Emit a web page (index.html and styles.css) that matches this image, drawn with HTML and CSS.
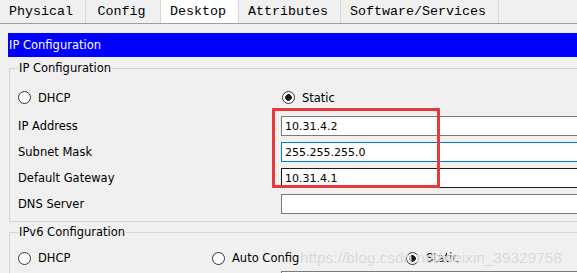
FILE: index.html
```html
<!DOCTYPE html>
<html lang="en">
<head>
    <meta charset="UTF-8">
    <title>IP Configuration</title>
    <link rel="stylesheet" href="styles.css">
</head>
<body>
    <div class="tabs">
        <span class="tab">Physical</span>
        <span class="tab tab-config">Config</span>
        <span class="tab active">Desktop</span>
        <span class="tab">Attributes</span>
        <span class="tab">Software/Services</span>
    </div>

    <div class="panel">
        <div class="title">IP Configuration</div>

        <fieldset class="group">
            <legend>IP Configuration</legend>
            <div class="rows">
                <label class="radio first"><input type="radio" name="v4"> DHCP</label>
                <label class="radio first"><input type="radio" name="v4" checked> Static</label>

                <span class="label">IP Address</span>
                <input class="field" type="text" value="10.31.4.2">

                <span class="label">Subnet Mask</span>
                <input class="field focus" type="text" value="255.255.255.0">

                <span class="label">Default Gateway</span>
                <input class="field dark" type="text" value="10.31.4.1">

                <span class="label">DNS Server</span>
                <input class="field" type="text" value="">
            </div>
        </fieldset>

        <fieldset class="group v6">
            <legend>IPv6 Configuration</legend>
            <div class="choices">
                <label class="radio"><input type="radio" name="v6"> DHCP</label>
                <label class="radio"><input type="radio" name="v6"> Auto Config</label>
                <label class="radio"><input type="radio" name="v6" checked> Static</label>
            </div>
            <div class="rows next">
                <span class="label"></span>
                <input class="field" type="text" value="">
            </div>
        </fieldset>
    </div>

    <div class="highlight"></div>
    <div class="watermark">https://blog.csdn.net/weixin_39329758</div>
</body>
</html>
```

FILE: styles.css
```css
body {
    margin: 0;
    background: #f0f0f0;
    font-family: "DejaVu Sans", sans-serif;
    font-size: 11.5px;
    color: #000;
    width: 577px;
    height: 273px;
    overflow: hidden;
    position: relative;
}
.tabs {
    display: flex;
    height: 23px;
    border-bottom: 1px solid #a0a0a0;
    background: #f0f0f0;
}
.tab {
    font-family: "Liberation Mono", monospace;
    font-size: 13.33px;
    line-height: 23px;
    padding: 0 12px 0 9px;
    border-right: 1px solid #d9d9d9;
    white-space: nowrap;
}
.tab-config {
    min-width: 53px;
    text-align: center;
}
.tab.active {
    background: #fff;
}
.panel {
    padding: 9px 0 0 8px;
    width: 720px;
}
.title {
    height: 24px;
    line-height: 25px;
    background: #0000ff;
    color: #fff;
    padding-left: 1px;
}
.group {
    margin: 4px 0 0 1px;
    padding: 15px 0 7px 8px;
    border: 1px solid #d5d5d5;
    min-width: 0;
}
.group legend {
    padding: 0 1px;
    line-height: 14px;
}
.group.v6 {
    margin-top: 3px;
    padding-top: 9px;
}
.rows {
    display: grid;
    grid-template-columns: 263px 1fr;
    grid-auto-rows: 20px;
    row-gap: 6px;
    align-items: center;
}
.rows .first {
    margin-bottom: 5px;
}
.rows.next {
    margin-top: 3px;
}
.choices {
    display: grid;
    grid-template-columns: 194px 194px 1fr;
    height: 20px;
    align-items: center;
}
.radio {
    display: flex;
    align-items: center;
    gap: 7px;
    white-space: nowrap;
}
.radio input {
    appearance: none;
    width: 13px;
    height: 13px;
    margin: 0;
    border: 1px solid #333;
    border-radius: 50%;
    background: #fff;
}
.radio input:checked {
    background: radial-gradient(circle, #1a1a1a 0 3px, #fff 3.6px);
}
.rows .radio + .radio input {
    margin-left: 1px;
}
.field {
    box-sizing: border-box;
    height: 20px;
    width: 100%;
    margin: 0;
    padding: 0 3px;
    border: 1px solid #7a7a7a;
    background: #fff;
    font-family: "DejaVu Sans", sans-serif;
    font-size: 11px;
    outline: none;
}
.field.focus {
    border-color: #0078d7;
}
.field.dark {
    border-color: #1a1a1a;
}
.highlight {
    position: absolute;
    left: 272px;
    top: 108px;
    width: 168px;
    height: 80px;
    box-sizing: border-box;
    border: 3px solid #e5393b;
}
.watermark {
    position: absolute;
    left: 300px;
    top: 249px;
    font-family: "Liberation Sans", sans-serif;
    font-size: 15.4px;
    color: #d8d8d8;
    text-shadow: 0 0 1px #fff;
    white-space: nowrap;
}
```
